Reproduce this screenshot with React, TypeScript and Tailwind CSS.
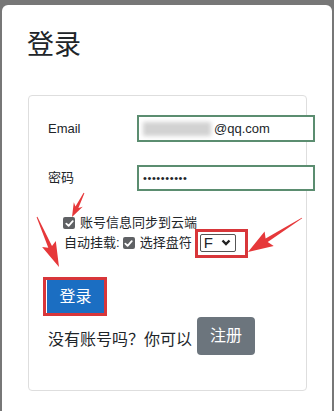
import React from "react";

const CJK = "font-['Liberation_Sans','Noto_Sans_CJK_SC',sans-serif]";

// red annotation arrow, tail -> tip, built as one polygon
const arrowPoints = (
  x1: number,
  y1: number,
  x2: number,
  y2: number,
  head: number,
  hw: number,
  sw: number
) => {
  const dx = x2 - x1;
  const dy = y2 - y1;
  const len = Math.hypot(dx, dy);
  const ux = dx / len;
  const uy = dy / len;
  const px = -uy;
  const py = ux;
  const bx = x2 - ux * head;
  const by = y2 - uy * head;
  const pts = [
    [x1 + px * 0.4, y1 + py * 0.4],
    [bx + px * sw, by + py * sw],
    [bx - ux * 3 + px * hw, by - uy * 3 + py * hw],
    [x2, y2],
    [bx - ux * 3 - px * hw, by - uy * 3 - py * hw],
    [bx - px * sw, by - py * sw],
    [x1 - px * 0.4, y1 - py * 0.4],
  ];
  return pts.map((p) => p.map((n) => n.toFixed(1)).join(",")).join(" ");
};

const Check = () => (
  <span className="flex h-[12px] w-[12px] shrink-0 items-center justify-center rounded-[2px] bg-[#5f6164]">
    <svg width="9" height="9" viewBox="0 0 10 10">
      <polyline
        points="1.5,5.2 4,7.6 8.6,2.4"
        fill="none"
        stroke="#fff"
        strokeWidth="2"
        strokeLinecap="round"
        strokeLinejoin="round"
      />
    </svg>
  </span>
);

const App = () => {
  return (
    <div
      className={`relative h-[411px] w-[334px] overflow-hidden bg-[#777777] px-[2px] pt-[5px] text-[#212529] ${CJK}`}
    >
      <div className="h-[420px] rounded-t-[6px] bg-white pl-[25px] pt-[24px]">
        <h1 className="text-[27px] font-normal leading-[32px] text-[#212529]">登录</h1>

        <div className="ml-[1px] mt-[34px] h-[296px] w-[279px] rounded-[4px] border border-[#dedede] pl-[19px] pt-[19px]">
          {/* email */}
          <div className="flex items-center">
            <label className="w-[89px] shrink-0 text-[13px]">Email</label>
            <div className="flex h-[27px] w-[178px] shrink-0 items-center border-2 border-[#5b8d70] bg-white pl-[4px] text-[13px]">
              <span className="mr-[3px] h-[14px] w-[68px] bg-[#d2d2d2] blur-[2px]" />
              <span>@qq.com</span>
            </div>
          </div>

          {/* password */}
          <div className="mt-[23px] flex items-center">
            <label className="w-[89px] shrink-0 text-[13px]">密码</label>
            <div className="flex h-[26px] w-[178px] shrink-0 items-center border-2 border-[#5b8d70] bg-white pl-[4px] text-[11px] tracking-[0.6px]">
              ••••••••••
            </div>
          </div>

          {/* options */}
          <div className="ml-[15px] mt-[22px] flex h-[20px] items-center gap-[5px] text-[13px]">
            <Check />
            <span>账号信息同步到云端</span>
          </div>
          <div className="ml-[16px] flex h-[20px] items-center text-[13px]">
            <span>自动挂载:</span>
            <span className="ml-[3px]">
              <Check />
            </span>
            <span className="ml-[5px]">选择盘符</span>
            <div className="ml-[3px] shrink-0 border-[3px] border-[#d8363a] pb-[3px] pl-[2px] pr-[9px] pt-[2px]">
              <div className="flex h-[18px] w-[36px] items-center rounded-[2px] border border-[#555] bg-white pl-[3px] text-[15px] leading-none">
                <span>F</span>
                <svg className="ml-[8px]" width="10" height="7" viewBox="0 0 10 7">
                  <polyline
                    points="1.5,1.5 5,5 8.5,1.5"
                    fill="none"
                    stroke="#222"
                    strokeWidth="2.4"
                  />
                </svg>
              </div>
            </div>
          </div>

          {/* login */}
          <div className="ml-[-5px] mt-[24px] w-fit border-[3px] border-[#d8363a]">
            <button className="flex h-[33px] w-[58px] items-center justify-center border-l border-white bg-[#1b6ec2] text-[16px] text-white">
              登录
            </button>
          </div>

          {/* register */}
          <div className="mt-[1px] flex items-start">
            <span className="mt-[11px] text-[16px] leading-[24px]">没有账号吗？你可以</span>
            <button className="ml-[5px] flex h-[38px] w-[58px] items-center justify-center rounded-[4px] bg-[#6c757d] text-[16px] text-white">
              注册
            </button>
          </div>
        </div>
      </div>

      <svg
        className="pointer-events-none absolute left-0 top-0"
        width="334"
        height="411"
        viewBox="0 0 334 411"
      >
        <polygon points={arrowPoints(84, 193, 72, 217, 11, 5, 1.6)} fill="#e6383a" />
        <polygon points={arrowPoints(37, 217, 59, 267, 22, 7.5, 2)} fill="#e6383a" />
        <polygon points={arrowPoints(302, 218, 248, 252, 22, 8.5, 2)} fill="#e6383a" />
      </svg>
    </div>
  );
};

export default App;
